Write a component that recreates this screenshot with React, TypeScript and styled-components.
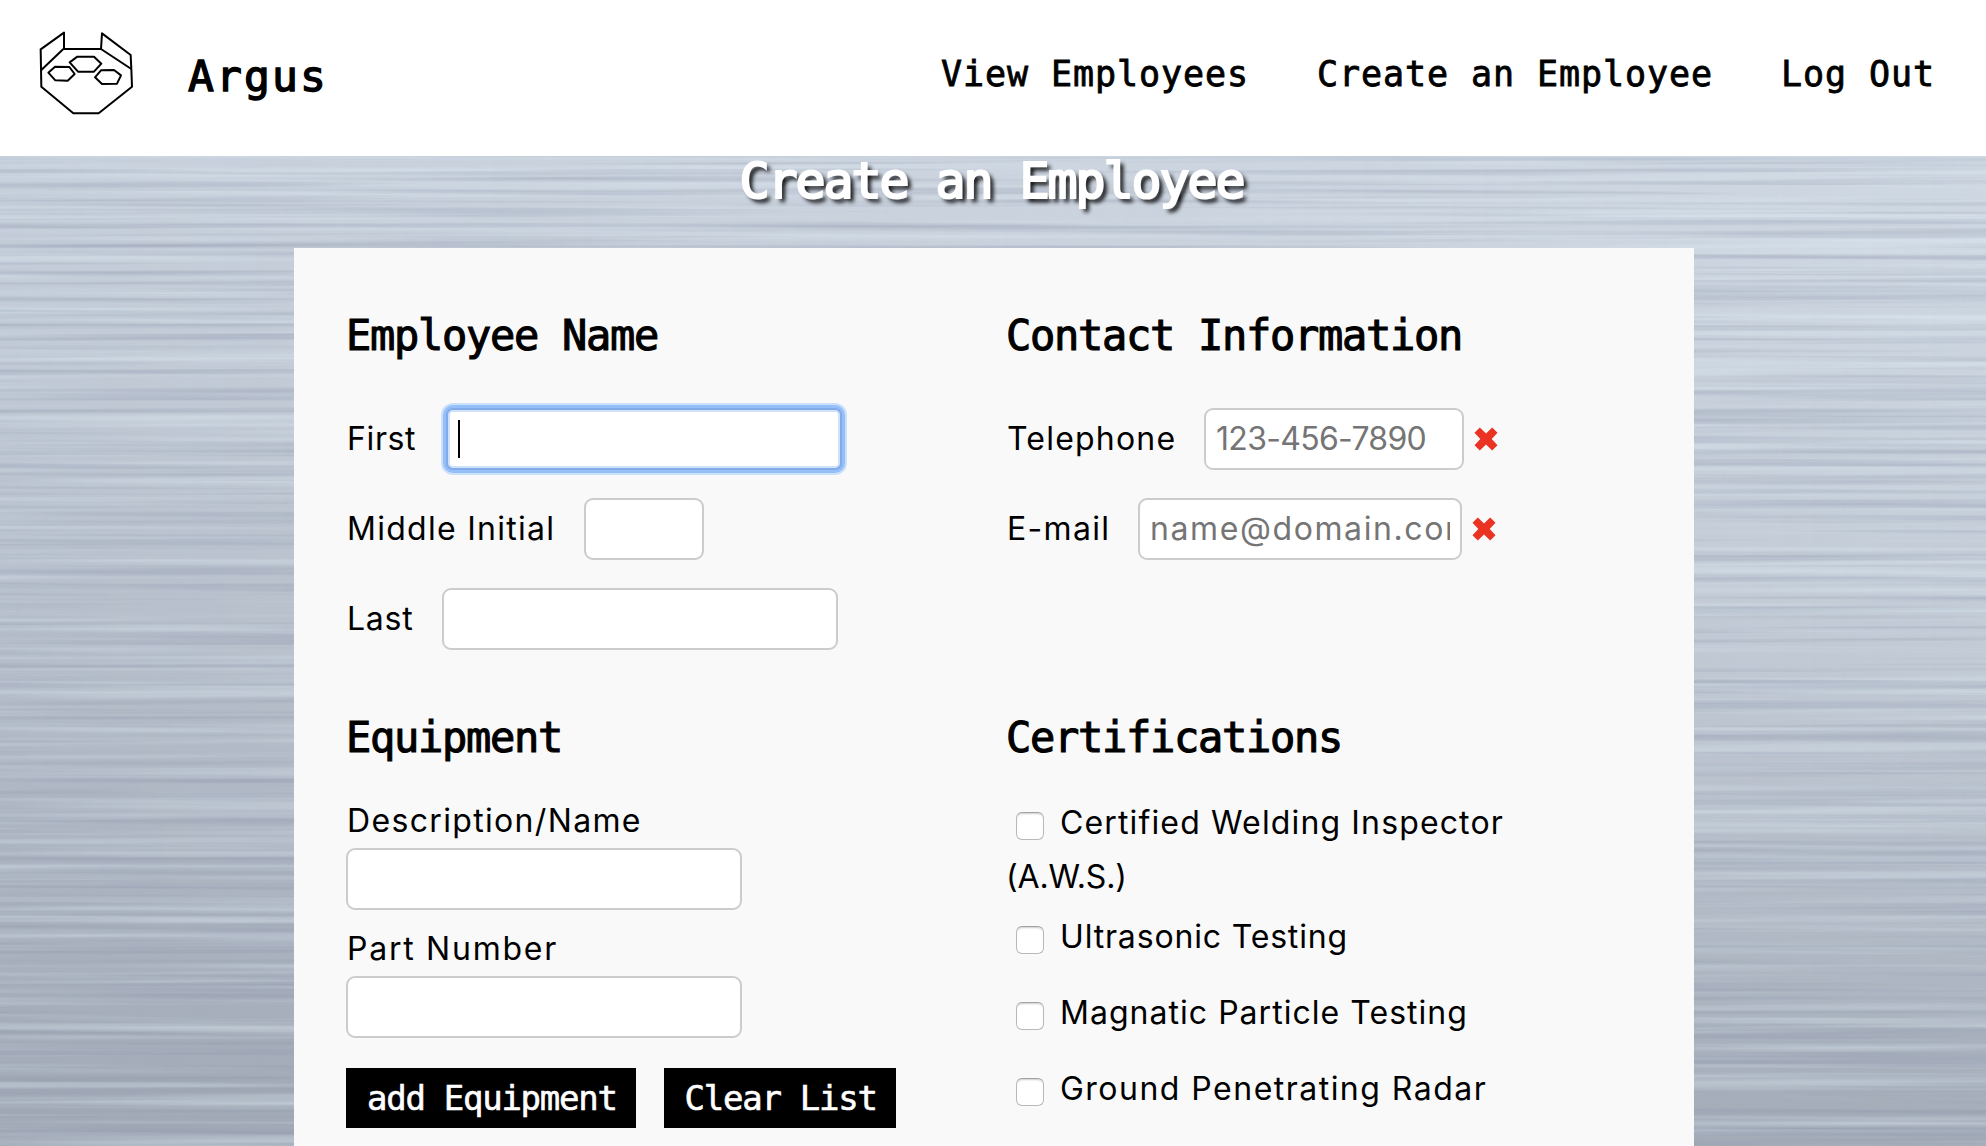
import React from "react";
import styled, { createGlobalStyle } from "styled-components";

const mono = `"DejaVu Sans Mono", "Liberation Mono", monospace`;
const sans = `Inter, "Open Sans", sans-serif`;

const GlobalStyle = createGlobalStyle`
  * { box-sizing: border-box; }
  html, body { margin: 0; height: 1146px; overflow: hidden; }
  body { font-family: ${sans}; font-size: 32px; color: #000; background: #fff; }
`;

const Page = styled.div`
  display: flex;
  flex-direction: column;
  width: 1986px;
  height: 1146px;
  overflow: hidden;
`;

const Header = styled.header`
  display: flex;
  align-items: flex-start;
  height: 156px;
  padding-left: 39px;
  background: #fff;
  flex-shrink: 0;
`;

const Logo = styled.svg`
  width: 96px;
  height: 84px;
  margin-top: 31px;
  fill: none;
  stroke: #000;
  stroke-width: 6;
  stroke-linejoin: round;
`;

const Brand = styled.a`
  margin: 46px 0 0 53px;
  font: 43px/60px ${mono};
  letter-spacing: 2.1px;
  -webkit-text-stroke: 1.4px #000;
`;

const Nav = styled.nav`
  display: flex;
  gap: 68px;
  margin: 44px 51px 0 auto;
`;

const NavLink = styled.a`
  font: 35px/60px ${mono};
  letter-spacing: 0.93px;
  -webkit-text-stroke: 0.8px #000;
  white-space: nowrap;
`;

const Main = styled.main`
  position: relative;
  flex: 1;
  min-height: 0;
  display: flex;
  flex-direction: column;
  background: linear-gradient(180deg, #c6cfdb 0%, #c1cad6 20%, #b3bbc8 55%, #a1a9b6 100%);
`;

const Metal = styled.svg`
  position: absolute;
  inset: 0;
  width: 100%;
  height: 100%;
`;

const Title = styled.h1`
  position: relative;
  margin: 0;
  height: 92px;
  padding-right: 3px;
  font: 50px/51px ${mono};
  letter-spacing: -2.1px;
  text-align: center;
  color: #fff;
  -webkit-text-stroke: 2.2px #fff;
  text-shadow: 4px 4px 4px #000;
`;

const Panel = styled.form`
  position: relative;
  flex: 1;
  width: 1400px;
  margin-left: 294px;
  padding: 58px 0 0 52px;
  background: #f9f9f9;
  display: grid;
  grid-template-columns: 660px 1fr;
  grid-template-rows: 402px 1fr;
`;

const Section = styled.section`
  display: flex;
  flex-direction: column;
`;

const Heading = styled.h2`
  margin: 0;
  font: 42px/60px ${mono};
  letter-spacing: -1.28px;
  -webkit-text-stroke: 1.1px #000;
`;

const Rows = styled.div`
  display: flex;
  flex-direction: column;
  gap: 28px;
  margin-top: 42px;
`;

const Row = styled.div`
  display: flex;
  align-items: center;
  height: 62px;
`;

const Label = styled.label<{ $ls: number; $w?: number }>`
  flex: none;
  width: ${p => (p.$w ? `${p.$w}px` : "auto")};
  letter-spacing: ${p => p.$ls}px;
  line-height: 37px;
  padding: 0 0 1px 1px;
  white-space: nowrap;
`;

const Input = styled.input<{ $w: number; $ls?: number }>`
  appearance: none;
  width: ${p => p.$w}px;
  height: 62px;
  padding: 0 10px 2px;
  border: 2px solid #ccc;
  border-radius: 9px;
  background: #fff;
  outline: none;
  font: 32px ${sans};
  letter-spacing: ${p => p.$ls ?? 0}px;
  &::placeholder { color: #757575; opacity: 1; }
`;

const FocusedField = styled.div`
  display: flex;
  align-items: center;
  width: 396px;
  height: 62px;
  padding-left: 10px;
  border: 2px solid #82abe9;
  border-radius: 7px;
  background: #fff;
  box-shadow: inset 0 0 0 2px #cfe2f9, 0 0 0 3px #94bff9, 0 0 0 5px #cbe0f9;
`;

const Caret = styled.span`
  width: 2px;
  height: 38px;
  background: #000;
`;

const Cross = styled.svg`
  width: 24px;
  height: 24px;
  margin-left: 10px;
  fill: #ea3323;
`;

const Stack = styled.div<{ $top: number }>`
  display: flex;
  flex-direction: column;
  gap: 8px;
  margin-top: ${p => p.$top}px;
`;

const Buttons = styled.div`
  display: flex;
  gap: 28px;
  margin-top: 30px;
`;

const Button = styled.button`
  height: 60px;
  padding: 0 19px 0 21px;
  border: 0;
  background: #000;
  color: #fff;
  font: 34px/60px ${mono};
  letter-spacing: -1.27px;
  -webkit-text-stroke: 0.6px #fff;
  white-space: nowrap;
`;

const CertList = styled.div`
  width: 520px;
  margin-top: 28px;
`;

const Cert = styled.label<{ $gap: number; $ls: number }>`
  display: block;
  margin-bottom: ${p => p.$gap}px;
  line-height: 54px;
  letter-spacing: ${p => p.$ls}px;
`;

const Checkbox = styled.input`
  appearance: none;
  width: 28px;
  height: 28px;
  margin: 0 16px 0 10px;
  vertical-align: -6px;
  border: 1px solid #b9b9b9;
  border-top-color: #a3a3a3;
  border-radius: 6px;
  background: #fff;
  box-shadow: inset 0 2px 2px -1px #ccc;
`;

const Tight = styled.span`
  letter-spacing: -0.16px;
`;

const InvalidMark = () => (
  <Cross viewBox="0 0 24 24">
    <path d="M5.8 0.5 L12 6.6 L18.2 0.5 L23.5 5.8 L17.7 12 L23.5 18.2 L18.2 23.5 L12 17.4 L5.8 23.5 L0.5 18.2 L6.3 12 L0.5 5.8 Z" />
  </Cross>
);

export default function App() {
  return (
    <Page>
      <GlobalStyle />
      <Header>
        <Logo viewBox="117 93 288 252">
          <path d="M122 148 L192 98 V147 H303 L306 100 L392 165 L394 207 L396 260 L296 340 H220 L124 260 Z" />
          <path d="M124 210 L190 147 M303 147 L394 207" />
          <path d="M209 187 L232 170 H282 L304 191 L282 215 H234 Z" />
          <path d="M145 218 L165 200 L208 201 L224 222 L203 242 L166 241 Z" />
          <path d="M285 232 L303 211 L342 210 L363 226 L351 251 L306 252 Z" />
        </Logo>
        <Brand>Argus</Brand>
        <Nav>
          <NavLink>View Employees</NavLink>
          <NavLink>Create an Employee</NavLink>
          <NavLink>Log Out</NavLink>
        </Nav>
      </Header>
      <Main>
        <Metal>
          <defs>
            <filter id="streaks" x="0" y="0" width="100%" height="100%" colorInterpolationFilters="sRGB">
              <feTurbulence type="fractalNoise" baseFrequency="0.0014 0.12" numOctaves={3} seed={7} />
              <feColorMatrix values="0 0 0 0 0.88  0 0 0 0 0.94  0 0 0 0 0.97  2.4 0 0 0 -1.08" />
            </filter>
            <filter id="grooves" x="0" y="0" width="100%" height="100%" colorInterpolationFilters="sRGB">
              <feTurbulence type="fractalNoise" baseFrequency="0.0014 0.15" numOctaves={3} seed={21} />
              <feColorMatrix values="0 0 0 0 0.54  0 0 0 0 0.57  0 0 0 0 0.66  0 2.4 0 0 -1.1" />
            </filter>
            <linearGradient id="shine" x1="0" x2="1">
              <stop offset="0" stopColor="#fff" stopOpacity="0" />
              <stop offset="1" stopColor="#e8f2f8" stopOpacity="0.26" />
            </linearGradient>
            <linearGradient id="fade" x1="0" x2="0" y1="0" y2="1">
              <stop offset="0" stopColor="#fff" />
              <stop offset="0.5" stopColor="#fff" />
              <stop offset="1" stopColor="#222" />
            </linearGradient>
            <mask id="upper">
              <rect width="100%" height="100%" fill="url(#fade)" />
            </mask>
          </defs>
          <rect width="100%" height="100%" fill="url(#shine)" mask="url(#upper)" />
          <rect width="100%" height="100%" filter="url(#streaks)" opacity="0.42" />
          <rect width="100%" height="100%" filter="url(#grooves)" opacity="0.42" />
        </Metal>
        <Title>Create an Employee</Title>
        <Panel>
          <Section>
            <Heading>Employee Name</Heading>
            <Rows>
              <Row>
                <Label $ls={0.63} $w={100}>First</Label>
                <FocusedField><Caret /></FocusedField>
              </Row>
              <Row>
                <Label $ls={1.28} $w={238}>Middle Initial</Label>
                <Input $w={120} />
              </Row>
              <Row>
                <Label $ls={0.75} $w={96}>Last</Label>
                <Input $w={396} />
              </Row>
            </Rows>
          </Section>
          <Section>
            <Heading>Contact Information</Heading>
            <Rows>
              <Row>
                <Label $ls={1.2} $w={198}>Telephone</Label>
                <Input $w={260} placeholder="123-456-7890" $ls={-0.7} />
                <InvalidMark />
              </Row>
              <Row>
                <Label $ls={1.3} $w={132}>E-mail</Label>
                <Input $w={324} placeholder="name@domain.com" $ls={1.6} />
                <InvalidMark />
              </Row>
            </Rows>
          </Section>
          <Section>
            <Heading>Equipment</Heading>
            <Stack $top={34}>
              <Label $ls={1.34}>Description/Name</Label>
              <Input $w={396} />
            </Stack>
            <Stack $top={20}>
              <Label $ls={1.74}>Part Number</Label>
              <Input $w={396} />
            </Stack>
            <Buttons>
              <Button type="button">add Equipment</Button>
              <Button type="button">Clear List</Button>
            </Buttons>
          </Section>
          <Section>
            <Heading>Certifications</Heading>
            <CertList>
              <Cert $gap={6} $ls={1.14}>
                <Checkbox type="checkbox" />
                Certified Welding Inspector <Tight>(A.W.S.)</Tight>
              </Cert>
              <Cert $gap={22} $ls={0.83}><Checkbox type="checkbox" />Ultrasonic Testing</Cert>
              <Cert $gap={22} $ls={1.03}><Checkbox type="checkbox" />Magnatic Particle Testing</Cert>
              <Cert $gap={22} $ls={1.48}><Checkbox type="checkbox" />Ground Penetrating Radar</Cert>
            </CertList>
          </Section>
        </Panel>
      </Main>
    </Page>
  );
}
